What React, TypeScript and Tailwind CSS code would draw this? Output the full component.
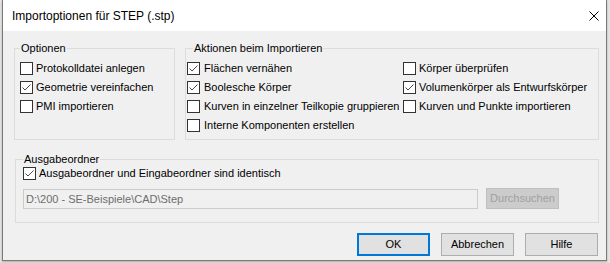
const FONT = "font-['Liberation_Sans',Arial,sans-serif]";

function Check({ checked }: { checked?: boolean }) {
  return (
    <span className="w-[13px] h-[13px] shrink-0 border border-[#333333] bg-white flex items-center justify-center">
      {checked && (
        <svg width="11" height="11" viewBox="0 0 11 11">
          <path d="M1.5 5.5 L4 8 L9.5 2.5" fill="none" stroke="#4d4d4d" strokeWidth="1" />
        </svg>
      )}
    </span>
  );
}

function Option({ label, checked, gap = "ml-[3px]" }: { label: string; checked?: boolean; gap?: string }) {
  return (
    <label className="flex items-center h-[13px] whitespace-nowrap">
      <Check checked={checked} />
      <span className={`${gap} leading-[13px]`}>{label}</span>
    </label>
  );
}

const ACTIONS = [
  { label: "Flächen vernähen", checked: true },
  { label: "Körper überprüfen", checked: false },
  { label: "Boolesche Körper", checked: true },
  { label: "Volumenkörper als Entwurfskörper", checked: true },
  { label: "Kurven in einzelner Teilkopie gruppieren", checked: false },
  { label: "Kurven und Punkte importieren", checked: false },
  { label: "Interne Komponenten erstellen", checked: false },
];

export default function App() {
  return (
    <div className={`w-[610px] h-[263px] bg-[#e4e4e4] flex ${FONT} text-[11px] text-black`}>
      <div className="ml-[2px] w-[605px] h-[261px] border-x border-b border-[#7a7a7a] flex flex-col shadow-[0_1px_2px_rgba(0,0,0,0.25)]">
        {/* title bar */}
        <div className="h-[31px] bg-white flex items-center justify-between pl-[9px] pr-[7px]">
          <span className="text-[12px] leading-[31px] pt-[1px]">Importoptionen für STEP (.stp)</span>
          <svg width="10" height="10" viewBox="0 0 10 10">
            <path d="M0.5 0.5 L9.5 9.5 M9.5 0.5 L0.5 9.5" stroke="#000" strokeWidth="1" />
          </svg>
        </div>

        {/* body */}
        <div className="flex-1 bg-[#f0f0f0] pt-[11px] pl-[11px] pr-[7px] flex flex-col">
          <div className="flex gap-[10px]">
            <fieldset className="w-[161px] h-[98px] border border-[#dcdcdc] pl-[5px]">
              <legend className="px-[1px] leading-[13px]">Optionen</legend>
              <div className="mt-[7px] flex flex-col gap-[6px]">
                <Option label="Protokolldatei anlegen" />
                <Option label="Geometrie vereinfachen" checked />
                <Option label="PMI importieren" />
              </div>
            </fieldset>

            <fieldset className="w-[414px] h-[98px] border border-[#dcdcdc] pl-[1px]">
              <legend className="ml-[6px] px-[1px] leading-[13px]">Aktionen beim Importieren</legend>
              <div className="mt-[7px] grid grid-cols-[216px_1fr] gap-y-[6px]">
                {ACTIONS.map((a, i) => (
                  <Option key={i} label={a.label} checked={a.checked} gap={i % 2 === 0 ? "ml-[4px]" : "ml-[3px]"} />
                ))}
              </div>
            </fieldset>
          </div>

          <fieldset className="mt-[13px] ml-[1px] w-[584px] h-[70px] border border-[#dcdcdc] pl-[7px]">
            <legend className="px-[1px] leading-[13px]">Ausgabeordner</legend>
            <div className="mt-[1px]">
              <Option label="Ausgabeordner und Eingabeordner sind identisch" checked />
            </div>
            <div className="mt-[8px] flex items-start gap-[8px]">
              <div className="mt-[1px] w-[455px] h-[20px] border border-[#cccccc] bg-[#f0f0f0] pl-[2px] flex items-center text-[#6d6d6d]">
                D:\200 - SE-Beispiele\CAD\Step
              </div>
              <div className="w-[73px] h-[21px] border border-[#bfbfbf] bg-[#cccccc] text-[#a0a0a0] flex items-center justify-center">
                Durchsuchen
              </div>
            </div>
          </fieldset>

          <div className="mt-[10px] flex justify-end gap-[11px] mr-[1px]">
            <button className="w-[73px] h-[23px] border-2 border-[#0078d7] bg-[#e1e1e1]">OK</button>
            <button className="w-[73px] h-[23px] border border-[#adadad] bg-[#e1e1e1]">Abbrechen</button>
            <button className="w-[73px] h-[23px] border border-[#adadad] bg-[#e1e1e1]">Hilfe</button>
          </div>
        </div>
      </div>
    </div>
  );
}
